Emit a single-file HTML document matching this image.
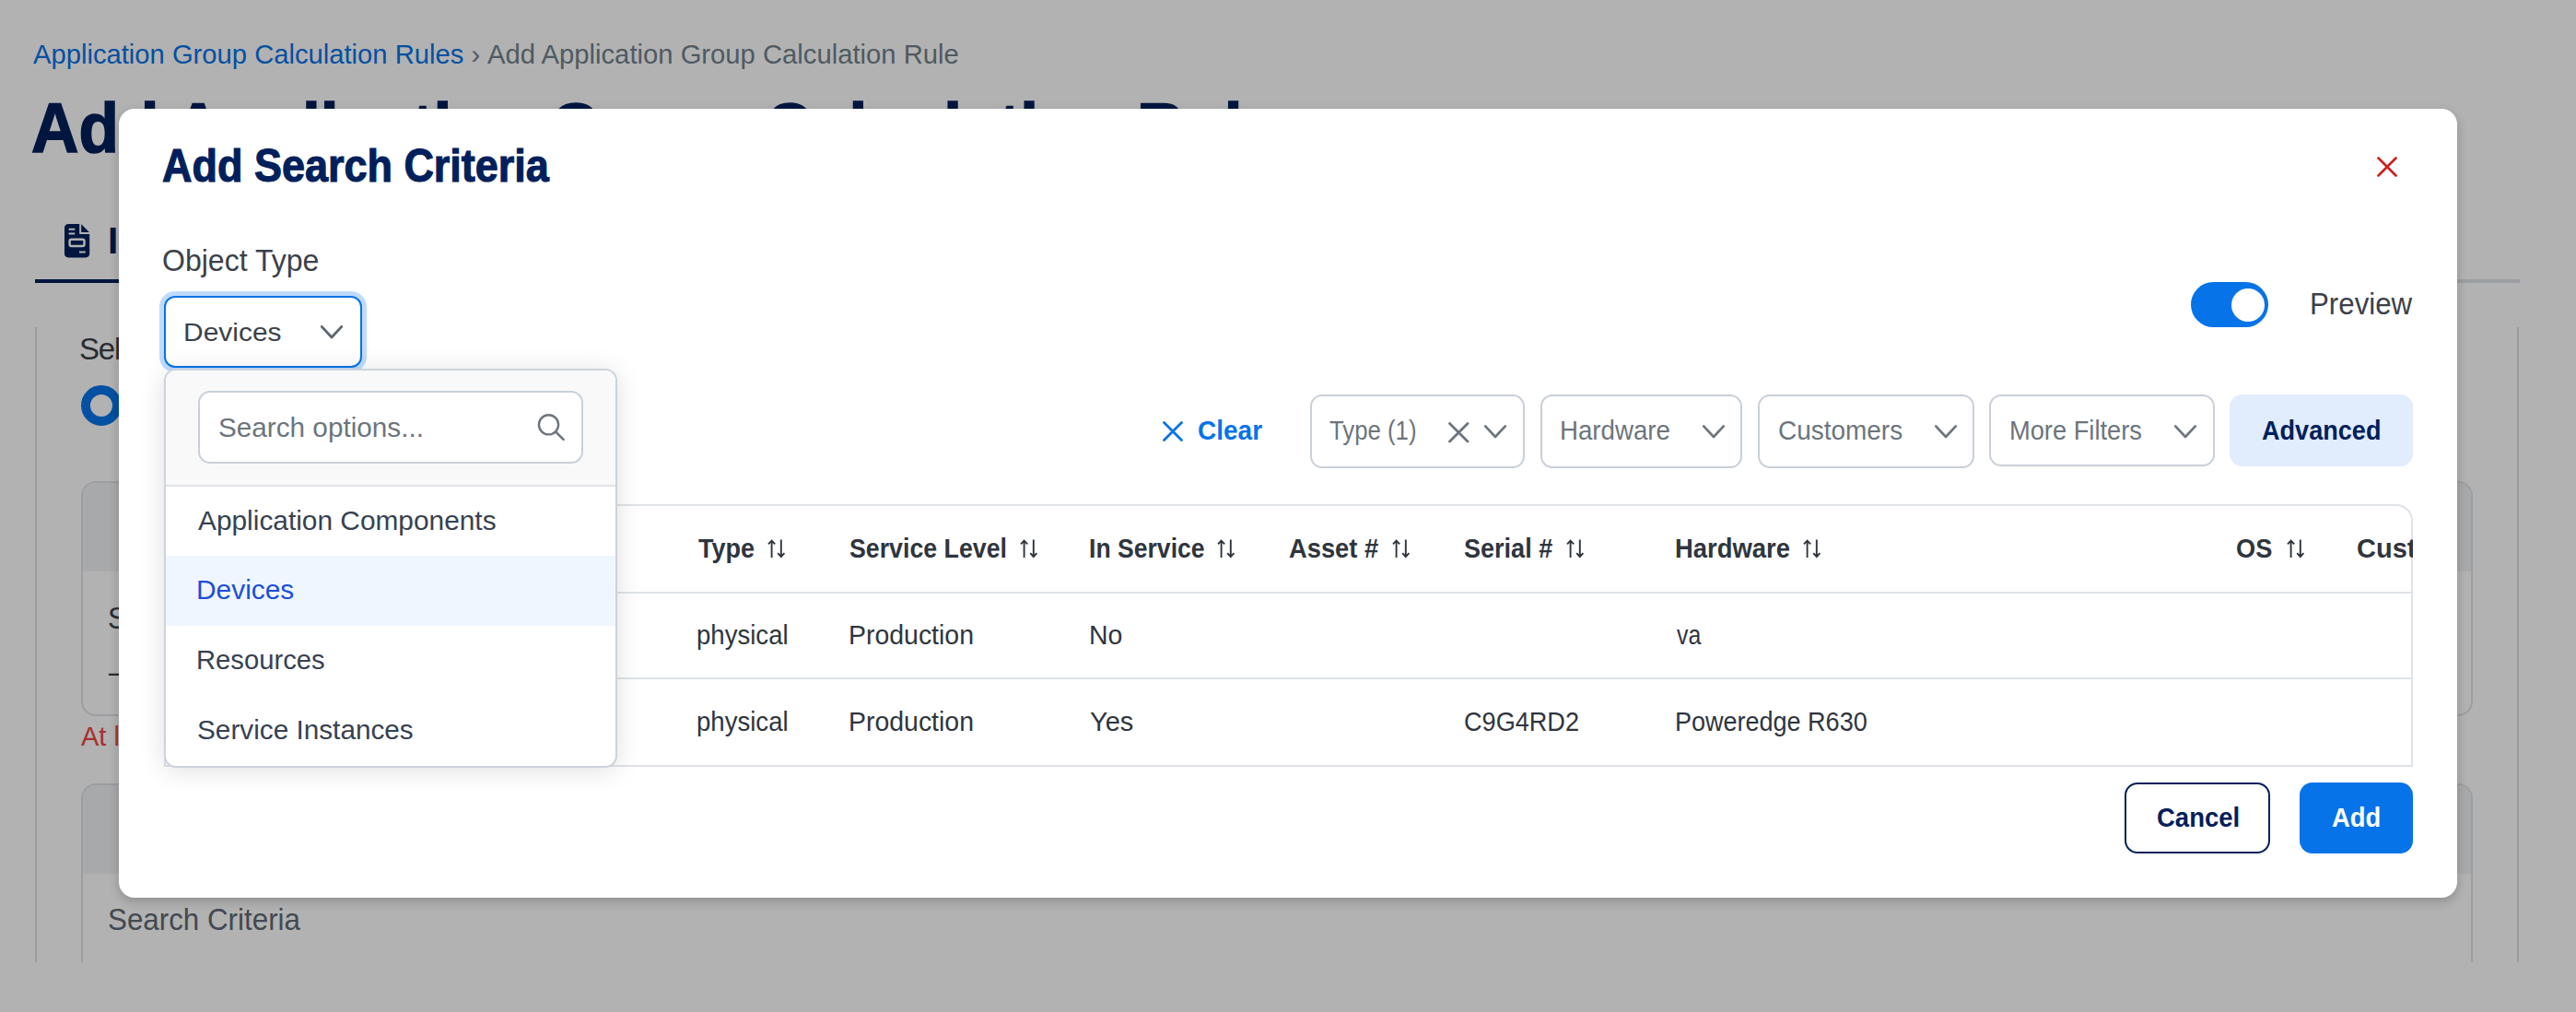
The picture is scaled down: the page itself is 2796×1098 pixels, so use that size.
<!DOCTYPE html>
<html lang="en"><head><meta charset="utf-8"><title>Add Application Group Calculation Rule</title>
<style>
*{box-sizing:border-box;margin:0;padding:0}
html,body{width:2796px;height:1098px;overflow:hidden;background:#fff}
body{position:relative;font-family:"Liberation Sans",sans-serif}
.t{position:absolute;white-space:nowrap;line-height:1;display:inline-block;transform-origin:0 50%}
.a{position:absolute;display:block}
.layer{position:absolute;left:0;top:0;width:2796px;height:1098px}
#page{overflow:hidden;height:1044px}
#overlay{background:rgba(0,0,0,.3)}
.card{position:absolute;left:88px;width:2596px;border:2px solid #dfe3e8;border-radius:16px;background:#fff;overflow:hidden}
.card .hd{height:96px;background:#f1f2f4}
#modal{position:absolute;left:129px;top:118px;width:2538px;height:856px;background:#fff;border-radius:17px;box-shadow:0 4px 12px rgba(0,0,0,.2)}
.fb{position:absolute;top:428px;height:79.5px;border:2px solid #c9d0d9;border-radius:13px;background:#fff}
.hl{position:absolute;height:2px;background:#dfe3e8}
</style></head><body>

<div class="layer" id="page">
<svg class="a" style="left:69.8px;top:243.2px" width="28" height="37" viewBox="0 0 28 37">
<path d="M4.5 0H18L27.2 9.2V32Q27.2 36.4 22.8 36.4H4.5Q0 36.4 0 32V4.5Q0 0 4.5 0Z" fill="#00205b"/>
<path d="M17.2 -1V9.9H28" fill="none" stroke="#fff" stroke-width="2"/>
<path d="M4.6 5.7H11.3M4.6 10.4H11.3M16 30.6H22.7" stroke="#fff" stroke-width="2"/>
<rect x="5.6" y="16.8" width="15.9" height="7.2" rx="2" fill="none" stroke="#fff" stroke-width="2.4"/>
</svg>
<div class="a" style="left:38px;top:303px;width:420px;height:4px;background:#00205b"></div>
<div class="a" style="left:458px;top:303px;width:2277px;height:4px;background:#dfe3e8"></div>
<div class="a" style="left:38px;top:355px;width:2px;height:700px;background:#dcdfe4"></div>
<div class="a" style="left:2732px;top:355px;width:2px;height:700px;background:#dcdfe4"></div>
<div class="a" style="left:88px;top:418px;width:44px;height:44px;border:10px solid #0673e8;border-radius:50%"></div>
<div class="card" style="top:522px;height:255px"><div class="hd"></div></div>
<div class="card" style="top:850px;height:400px"><div class="hd"></div></div>
<span class="t" id="t0" style="left:36.0px;top:45.0px;font-size:29px;color:#0673e8;transform:scaleX(1.0065);">Application Group Calculation Rules</span>
<span class="t" id="t1" style="left:511.5px;top:45.0px;font-size:29px;color:#72828d;">›</span>
<span class="t" id="t2" style="left:529.0px;top:45.0px;font-size:29px;color:#72828d;transform:scaleX(1.0079);">Add Application Group Calculation Rule</span>
<span class="t" id="t3" style="left:34.1px;top:101.2px;font-size:76px;color:#00205b;transform:scaleX(0.9369);font-weight:700;-webkit-text-stroke:1.6px #00205b;">Add Application Group Calculation Rule</span>
<span class="t" id="t4" style="left:117.0px;top:240.5px;font-size:40.5px;color:#00205b;font-weight:700;letter-spacing:5px;">Info</span>
<span class="t" id="t5" style="left:86.0px;top:362.1px;font-size:33px;color:#3c4149;letter-spacing:-1.2px;">Select Object</span>
<span class="t" id="t6" style="left:117.1px;top:653.6px;font-size:33px;color:#3c4149;transform:scaleX(0.9495);">Search Criteria</span>
<span class="t" id="t7" style="left:118.0px;top:712.1px;font-size:33px;color:#3c4149;">–</span>
<span class="t" id="t8" style="left:88.0px;top:785.3px;font-size:29px;color:#ef4444;">At least one criteria is required</span>
<span class="t" id="t9" style="left:117.1px;top:981.1px;font-size:33px;color:#5f6975;transform:scaleX(0.9495);">Search Criteria</span>
</div>
<div class="layer" id="overlay"></div>

<div class="layer" id="mlayer">
<div id="modal"></div>
<svg class="a" style="left:2580.0px;top:170.0px" width="22" height="22" viewBox="0 0 22 22"><path d="M1.5 1.5L20.5 20.5M20.5 1.5L1.5 20.5" fill="none" stroke="#cc1f1f" stroke-width="2.6" stroke-linecap="round"/></svg>
<div class="a" style="left:173px;top:316px;width:225px;height:88px;border-radius:17px;background:#bfdbfe"></div>
<div class="a" style="left:178px;top:321px;width:215px;height:78px;border:2.5px solid #0673e8;border-radius:12px;background:#fff"></div>
<svg class="a" style="left:347.5px;top:353.0px" width="24" height="15" viewBox="0 0 24 15"><path d="M1.2 1.4L12.0 13L22.8 1.4" fill="none" stroke="#5b6570" stroke-width="2.8" stroke-linecap="round" stroke-linejoin="round"/></svg>
<div class="a" style="left:2378px;top:306px;width:84px;height:49px;border-radius:25px;background:#0673e8"></div>
<div class="a" style="left:2421.5px;top:312.5px;width:36px;height:36px;border-radius:50%;background:#fff"></div>
<div class="fb" style="left:1421.5px;width:233.0px"></div>
<div class="fb" style="left:1671.5px;width:219.0px"></div>
<div class="fb" style="left:1907.5px;width:235.5px"></div>
<div class="fb" style="left:2159px;width:244.5px;height:77.5px"></div>
<div class="a" style="left:2420px;top:428px;width:199px;height:77.5px;border-radius:14px;background:#e1ecfd"></div>
<svg class="a" style="left:1611.0px;top:461.0px" width="24" height="15" viewBox="0 0 24 15"><path d="M1.2 1.4L12.0 13L22.8 1.4" fill="none" stroke="#6c757d" stroke-width="2.6" stroke-linecap="round" stroke-linejoin="round"/></svg><svg class="a" style="left:1848.0px;top:461.0px" width="24" height="15" viewBox="0 0 24 15"><path d="M1.2 1.4L12.0 13L22.8 1.4" fill="none" stroke="#6c757d" stroke-width="2.6" stroke-linecap="round" stroke-linejoin="round"/></svg><svg class="a" style="left:2099.5px;top:461.0px" width="24" height="15" viewBox="0 0 24 15"><path d="M1.2 1.4L12.0 13L22.8 1.4" fill="none" stroke="#6c757d" stroke-width="2.6" stroke-linecap="round" stroke-linejoin="round"/></svg><svg class="a" style="left:2360.0px;top:461.0px" width="24" height="15" viewBox="0 0 24 15"><path d="M1.2 1.4L12.0 13L22.8 1.4" fill="none" stroke="#6c757d" stroke-width="2.6" stroke-linecap="round" stroke-linejoin="round"/></svg><svg class="a" style="left:1572.0px;top:458.0px" width="22.5" height="22.5" viewBox="0 0 22.5 22.5"><path d="M1.5 1.5L21.0 21.0M21.0 1.5L1.5 21.0" fill="none" stroke="#6c757d" stroke-width="2.8" stroke-linecap="round"/></svg><svg class="a" style="left:1262.0px;top:457.0px" width="22" height="22" viewBox="0 0 22 22"><path d="M1.5 1.5L20.5 20.5M20.5 1.5L1.5 20.5" fill="none" stroke="#0673e8" stroke-width="2.8" stroke-linecap="round"/></svg>
<div class="a" style="left:178px;top:547px;width:2441px;height:285px;overflow:hidden">
<div class="a" style="left:0;top:0;width:2441px;height:330px;border:2px solid #dfe3e8;border-radius:18px"></div>
</div>
<div class="hl" style="left:180px;top:642px;width:2437px"></div>
<div class="hl" style="left:180px;top:735px;width:2437px"></div>
<div class="hl" style="left:180px;top:829.5px;width:2437px"></div>
<svg class="a" style="left:832.5px;top:585px" width="20" height="21" viewBox="0 0 20 21"><path d="M4.6 20V1.6M1 5.4L4.6 1.6L8.2 5.4M14.8 0.6V19M11.2 15.2L14.8 19L18.4 15.2" fill="none" stroke="#2f353e" stroke-width="1.9" stroke-linejoin="miter"/></svg><svg class="a" style="left:1106.5px;top:585px" width="20" height="21" viewBox="0 0 20 21"><path d="M4.6 20V1.6M1 5.4L4.6 1.6L8.2 5.4M14.8 0.6V19M11.2 15.2L14.8 19L18.4 15.2" fill="none" stroke="#2f353e" stroke-width="1.9" stroke-linejoin="miter"/></svg><svg class="a" style="left:1321.0px;top:585px" width="20" height="21" viewBox="0 0 20 21"><path d="M4.6 20V1.6M1 5.4L4.6 1.6L8.2 5.4M14.8 0.6V19M11.2 15.2L14.8 19L18.4 15.2" fill="none" stroke="#2f353e" stroke-width="1.9" stroke-linejoin="miter"/></svg><svg class="a" style="left:1511.0px;top:585px" width="20" height="21" viewBox="0 0 20 21"><path d="M4.6 20V1.6M1 5.4L4.6 1.6L8.2 5.4M14.8 0.6V19M11.2 15.2L14.8 19L18.4 15.2" fill="none" stroke="#2f353e" stroke-width="1.9" stroke-linejoin="miter"/></svg><svg class="a" style="left:1699.7px;top:585px" width="20" height="21" viewBox="0 0 20 21"><path d="M4.6 20V1.6M1 5.4L4.6 1.6L8.2 5.4M14.8 0.6V19M11.2 15.2L14.8 19L18.4 15.2" fill="none" stroke="#2f353e" stroke-width="1.9" stroke-linejoin="miter"/></svg><svg class="a" style="left:1957.0px;top:585px" width="20" height="21" viewBox="0 0 20 21"><path d="M4.6 20V1.6M1 5.4L4.6 1.6L8.2 5.4M14.8 0.6V19M11.2 15.2L14.8 19L18.4 15.2" fill="none" stroke="#2f353e" stroke-width="1.9" stroke-linejoin="miter"/></svg><svg class="a" style="left:2482.0px;top:585px" width="20" height="21" viewBox="0 0 20 21"><path d="M4.6 20V1.6M1 5.4L4.6 1.6L8.2 5.4M14.8 0.6V19M11.2 15.2L14.8 19L18.4 15.2" fill="none" stroke="#2f353e" stroke-width="1.9" stroke-linejoin="miter"/></svg>
<div class="a" style="left:2306px;top:849px;width:158px;height:77px;border:2.5px solid #00205b;border-radius:14px;background:#fff"></div>
<div class="a" style="left:2496px;top:849px;width:123px;height:77px;border-radius:14px;background:#0673e8"></div>
<span class="t" id="t10" style="left:175.6px;top:154.9px;font-size:50px;color:#00205b;transform:scaleX(0.8994);font-weight:700;-webkit-text-stroke:1.1px #00205b;">Add Search Criteria</span>
<span class="t" id="t11" style="left:176.1px;top:265.7px;font-size:33px;color:#3c4149;transform:scaleX(0.9709);">Object Type</span>
<span class="t" id="t12" style="left:198.9px;top:346.4px;font-size:28.5px;color:#3c4149;transform:scaleX(1.0510);">Devices</span>
<span class="t" id="t13" style="left:2507.2px;top:313.4px;font-size:33px;color:#3c4149;transform:scaleX(0.9474);">Preview</span>
<span class="t" id="t14" style="left:1300.0px;top:453.0px;font-size:29px;color:#0673e8;transform:scaleX(0.9662);font-weight:700;">Clear</span>
<span class="t" id="t15" style="left:1442.8px;top:453.3px;font-size:29px;color:#6c757d;transform:scaleX(0.8885);">Type (1)</span>
<span class="t" id="t16" style="left:1693.1px;top:453.3px;font-size:29px;color:#6c757d;transform:scaleX(0.9541);">Hardware</span>
<span class="t" id="t17" style="left:1930.0px;top:453.3px;font-size:29px;color:#6c757d;transform:scaleX(0.9638);">Customers</span>
<span class="t" id="t18" style="left:2181.1px;top:453.3px;font-size:29px;color:#6c757d;transform:scaleX(0.9400);">More Filters</span>
<span class="t" id="t19" style="left:2455.1px;top:453.0px;font-size:29px;color:#00205b;transform:scaleX(0.9338);font-weight:700;">Advanced</span>
<span class="t" id="t20" style="left:757.5px;top:580.5px;font-size:29px;color:#2f353e;transform:scaleX(0.9323);font-weight:700;">Type</span>
<span class="t" id="t21" style="left:922.1px;top:580.5px;font-size:29px;color:#2f353e;transform:scaleX(0.9220);font-weight:700;">Service Level</span>
<span class="t" id="t22" style="left:1182.2px;top:580.5px;font-size:29px;color:#2f353e;transform:scaleX(0.9164);font-weight:700;">In Service</span>
<span class="t" id="t23" style="left:1398.8px;top:580.5px;font-size:29px;color:#2f353e;transform:scaleX(0.9412);font-weight:700;">Asset #</span>
<span class="t" id="t24" style="left:1588.8px;top:580.5px;font-size:29px;color:#2f353e;transform:scaleX(0.9324);font-weight:700;">Serial #</span>
<span class="t" id="t25" style="left:1818.1px;top:580.5px;font-size:29px;color:#2f353e;transform:scaleX(0.9457);font-weight:700;">Hardware</span>
<span class="t" id="t26" style="left:2427.1px;top:580.5px;font-size:29px;color:#2f353e;transform:scaleX(0.9375);font-weight:700;">OS</span>
<span class="t" id="t27" style="left:2558.0px;top:580.5px;font-size:29px;color:#2f353e;font-weight:700;width:60.5px;overflow:hidden;">Customer</span>
<span class="t" id="t28" style="left:756.0px;top:674.5px;font-size:29px;color:#2f353e;transform:scaleX(0.9505);">physical</span>
<span class="t" id="t29" style="left:921.0px;top:674.5px;font-size:29px;color:#2f353e;transform:scaleX(0.9807);">Production</span>
<span class="t" id="t30" style="left:1182.0px;top:674.5px;font-size:29px;color:#2f353e;transform:scaleX(0.9824);">No</span>
<span class="t" id="t31" style="left:1820.0px;top:674.5px;font-size:29px;color:#2f353e;transform:scaleX(0.8548);">va</span>
<span class="t" id="t32" style="left:756.0px;top:768.5px;font-size:29px;color:#2f353e;transform:scaleX(0.9505);">physical</span>
<span class="t" id="t33" style="left:921.0px;top:768.5px;font-size:29px;color:#2f353e;transform:scaleX(0.9807);">Production</span>
<span class="t" id="t34" style="left:1183.0px;top:768.5px;font-size:29px;color:#2f353e;">Yes</span>
<span class="t" id="t35" style="left:1588.8px;top:768.5px;font-size:29px;color:#2f353e;transform:scaleX(0.9341);">C9G4RD2</span>
<span class="t" id="t36" style="left:1818.1px;top:768.5px;font-size:29px;color:#2f353e;transform:scaleX(0.9312);">Poweredge R630</span>
<span class="t" id="t37" style="left:2340.5px;top:872.5px;font-size:29px;color:#00205b;transform:scaleX(0.9478);font-weight:700;">Cancel</span>
<span class="t" id="t38" style="left:2531.1px;top:872.5px;font-size:29px;color:#fff;transform:scaleX(0.9444);font-weight:700;">Add</span>
</div>

<div class="layer" id="ddlayer">
<div class="a" style="left:178px;top:400px;width:491.5px;height:432.5px;border:2px solid #ccd3dc;border-radius:13px;background:#fff;box-shadow:0 3px 28px rgba(0,0,0,.13);overflow:hidden">
<div style="height:125.5px;background:#f9f9fa;border-bottom:2px solid #dfe3e8"></div>
<div style="position:absolute;left:0;top:201px;width:100%;height:76px;background:#eff6ff"></div>
</div>
<div class="a" style="left:214.5px;top:423.5px;width:418px;height:79.5px;border:2px solid #c9d0d9;border-radius:13px;background:#fff"></div>
<svg class="a" style="left:583px;top:448px" width="31" height="31" viewBox="0 0 31 31"><circle cx="12.5" cy="12.8" r="10.6" fill="none" stroke="#6c757d" stroke-width="2.4"/><path d="M20.3 20.6L28.6 28.9" stroke="#6c757d" stroke-width="2.6" stroke-linecap="round"/></svg>
<span class="t" id="t39" style="left:236.8px;top:449.0px;font-size:29.5px;color:#6c757d;transform:scaleX(1.0069);">Search options...</span>
<span class="t" id="t40" style="left:214.7px;top:550.3px;font-size:29.5px;color:#374151;transform:scaleX(1.0119);">Application Components</span>
<span class="t" id="t41" style="left:212.7px;top:625.3px;font-size:29.5px;color:#1d4ed8;transform:scaleX(1.0127);">Devices</span>
<span class="t" id="t42" style="left:212.7px;top:701.4px;font-size:29.5px;color:#374151;transform:scaleX(0.9906);">Resources</span>
<span class="t" id="t43" style="left:213.7px;top:777.4px;font-size:29.5px;color:#374151;transform:scaleX(1.0082);">Service Instances</span>
</div>
</body></html>
